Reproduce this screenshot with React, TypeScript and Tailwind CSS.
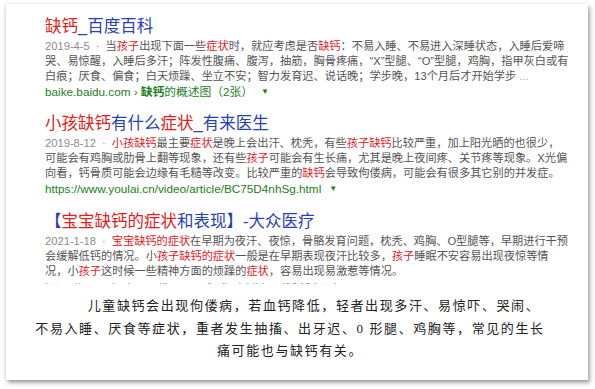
import type { ReactNode } from 'react';

const SANS = "font-['Liberation_Sans','Noto_Sans_CJK_SC',sans-serif]";

// 红色高亮关键词
function R({ children }: { children: ReactNode }) {
  return <span className="text-[#e0201d]">{children}</span>;
}

function Title({ children }: { children: ReactNode }) {
  return (
    <div className="text-[16.5px] leading-[22px] text-[#2a3fb5] whitespace-nowrap mb-[2px]">{children}</div>
  );
}

function Line({ children }: { children: ReactNode }) {
  return <div className="text-[11.2px] leading-[15px] text-[#555] whitespace-nowrap">{children}</div>;
}

function DateTag({ d }: { d: string }) {
  return (
    <span className="text-[#8c8c8c]">
      {d}
      <span className="mx-[6px]">·</span>
    </span>
  );
}

function Url({ children }: { children: ReactNode }) {
  return (
    <div className="text-[11.75px] leading-[15px] text-[#1c7f1c] whitespace-nowrap flex items-center">
      {children}
      <span className="ml-[8px] text-[8px] leading-none">▼</span>
    </div>
  );
}

export default function App() {
  return (
    <div className={`w-[595px] h-[389px] bg-white pt-[4px] pl-[6px] ${SANS}`}>
      <div className="w-[582px] h-[376px] bg-white shadow-[2px_3px_4px_rgba(0,0,0,0.35),-1px_0_3px_rgba(0,0,0,0.12)] pt-[11px] pl-[39px] overflow-hidden">
        {/* 结果 1 */}
        <div className="mb-[13px]">
          <Title>
            <R>缺钙</R>_百度百科
          </Title>
          <Line>
            <DateTag d="2019-4-5" />当<R>孩子</R>出现下面一些<R>症状</R>时，就应考虑是否<R>缺钙</R>：不易入睡、不易进入深睡状态，入睡后爱啼
          </Line>
          <Line>哭、易惊醒，入睡后多汗；阵发性腹痛、腹泻，抽筋，胸骨疼痛，“X”型腿、“O”型腿，鸡胸，指甲灰白或有</Line>
          <Line>
            白痕；厌食、偏食；白天烦躁、坐立不安；智力发育迟、说话晚；学步晚，13个月后才开始学步 <span className="text-[#aaa]">...</span>
          </Line>
          <Url>
            baike.baidu.com › <b className="ml-[3px]">缺钙</b>的概述图（2张）
          </Url>
        </div>

        {/* 结果 2 */}
        <div className="mb-[14px]">
          <Title>
            <R>小孩缺钙</R>有什么<R>症状</R>_有来医生
          </Title>
          <Line>
            <DateTag d="2019-8-12" />
            <R>小孩缺钙</R>最主要<R>症状</R>是晚上会出汗、枕秃，有些<R>孩子缺钙</R>比较严重，加上阳光晒的也很少，
          </Line>
          <Line>
            可能会有鸡胸或肋骨上翻等现象，还有些<R>孩子</R>可能会有生长痛，尤其是晚上夜间疼、关节疼等现象。X光偏
          </Line>
          <Line>
            向看，钙骨质可能会边缘有毛糙等改变。比较严重的<R>缺钙</R>会导致佝偻病，可能会有很多其它别的并发症。
          </Line>
          <Url>https://www.youlai.cn/video/article/BC75D4nhSg.html</Url>
        </div>

        {/* 结果 3 */}
        <div>
          <Title>
            【<R>宝宝缺钙的症状</R>和表现】-大众医疗
          </Title>
          <Line>
            <DateTag d="2021-1-18" />
            <R>宝宝缺钙的症状</R>在早期为夜汗、夜惊，骨骼发育问题，枕秃、鸡胸、O型腿等，早期进行干预
          </Line>
          <Line>
            会缓解低钙的情况。小<R>孩子缺钙的症状</R>一般是在早期表现夜汗比较多，<R>孩子</R>睡眠不安容易出现夜惊等情
          </Line>
          <Line>
            况，小<R>孩子</R>这时候一些精神方面的烦躁的<R>症状</R>，容易出现易激惹等情况。
          </Line>
          <div className="h-[5px] overflow-hidden opacity-70">
            <Url>https://www.dazhongyiliao.com/baike/children/1043.html</Url>
          </div>
        </div>

        {/* 说明文字 */}
        <div className="mt-[11px] -ml-[39px] pr-[14px] text-center text-[13px] leading-[22.5px] tracking-[1.6px] text-[#222] font-['Liberation_Serif','Noto_Sans_CJK_SC',serif]">
          <div className="pl-[48px]">儿童缺钙会出现佝偻病，若血钙降低，轻者出现多汗、易惊吓、哭闹、</div>
          <div>不易入睡、厌食等症状，重者发生抽搐、出牙迟、0 形腿、鸡胸等，常见的生长</div>
          <div>痛可能也与缺钙有关。</div>
        </div>
      </div>
    </div>
  );
}
